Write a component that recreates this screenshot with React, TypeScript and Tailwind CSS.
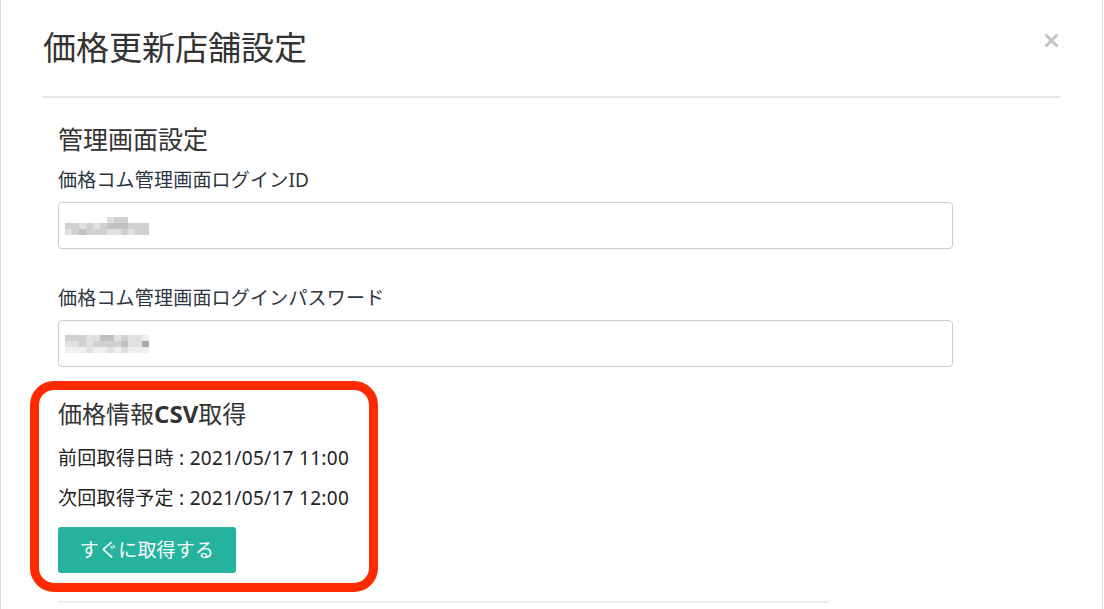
const SHADES = ["bg-white", "bg-[#efefef]", "bg-[#e0e0e0]", "bg-[#d0d0d0]", "bg-[#c0c0c0]", "bg-[#a9a9a9]"];

// pixelated (redacted) value inside the inputs, one digit per 7px cell
const LOGIN_ID = ["0000000000000", "0000002330000", "3323234443330", "2343332232330", "0000000000000"];
const PASSWORD = ["0000000000000", "3332244232210", "2232333342250", "1112112121110", "0000000000000"];

function Mosaic({ rows }: { rows: string[] }) {
  return (
    <div className="flex flex-col">
      {rows.map((row, r) => (
        <div key={r} className="flex">
          {row.split("").map((c, i) => (
            <span key={i} className={`block w-[7px] h-[6px] ${SHADES[Number(c)]}`} />
          ))}
        </div>
      ))}
    </div>
  );
}

function Field({ label, rows, top }: { label: string; rows: string[]; top: string }) {
  return (
    <div className={top}>
      <label className="block text-[19px] leading-[26px] text-[#2b3542] tracking-[0.2px]">{label}</label>
      <div className="mt-[9px] w-[895px] h-[47px] rounded-[4px] border border-[#cccccc] bg-white flex items-center pl-[6px]">
        <Mosaic rows={rows} />
      </div>
    </div>
  );
}

export default function App() {
  return (
    <div
      className="relative w-[1103px] h-[609px] overflow-hidden bg-white border-l border-r border-[#dcdcdc]"
      style={{ fontFamily: '"Noto Sans", "Noto Sans CJK JP", sans-serif' }}
    >
      <div className="mx-[42px] pt-[26px] pb-[26px] border-b-2 border-[#e6e6e6] flex items-start justify-between">
        <h1 className="text-[33px] leading-[44px] text-[#333333] font-normal">価格更新店舗設定</h1>
        <button className="mt-[8px] mr-[2px] p-0">
          <svg width="13" height="13" viewBox="0 0 13 13">
            <path d="M1.5 1.5 L11.5 11.5 M11.5 1.5 L1.5 11.5" stroke="#c4c4c4" strokeWidth="3" strokeLinecap="square" />
          </svg>
        </button>
      </div>

      <div className="pl-[57px]">
        <h2 className="mt-[25px] text-[25px] leading-[32px] text-[#333333]">管理画面設定</h2>
        <Field top="mt-[12px]" label="価格コム管理画面ログインID" rows={LOGIN_ID} />
        <Field top="mt-[36px]" label="価格コム管理画面ログインパスワード" rows={PASSWORD} />

        <h2 className="mt-[31px] text-[24px] leading-[32px] text-[#333333]">
          価格情報<span className="font-bold">CSV</span>取得
        </h2>
        <p className="mt-[15px] text-[19px] leading-[26px] text-[#222222] tracking-[0.3px]">前回取得日時 : 2021/05/17 11:00</p>
        <p className="mt-[14px] text-[19px] leading-[26px] text-[#222222] tracking-[0.3px]">次回取得予定 : 2021/05/17 12:00</p>
        <button className="mt-[16px] h-[46px] w-[178px] rounded-[3px] bg-[#25b39d] text-white text-[19px] tracking-[0.2px]">
          すぐに取得する
        </button>
        <div className="mt-[28px] w-[771px] h-[2px] bg-[#ececec]" />
      </div>

      {/* annotation outline */}
      <div className="absolute left-[29px] top-[381px] w-[348px] h-[211px] rounded-[24px] border-[9px] border-[#ff2a00] pointer-events-none" />
    </div>
  );
}
